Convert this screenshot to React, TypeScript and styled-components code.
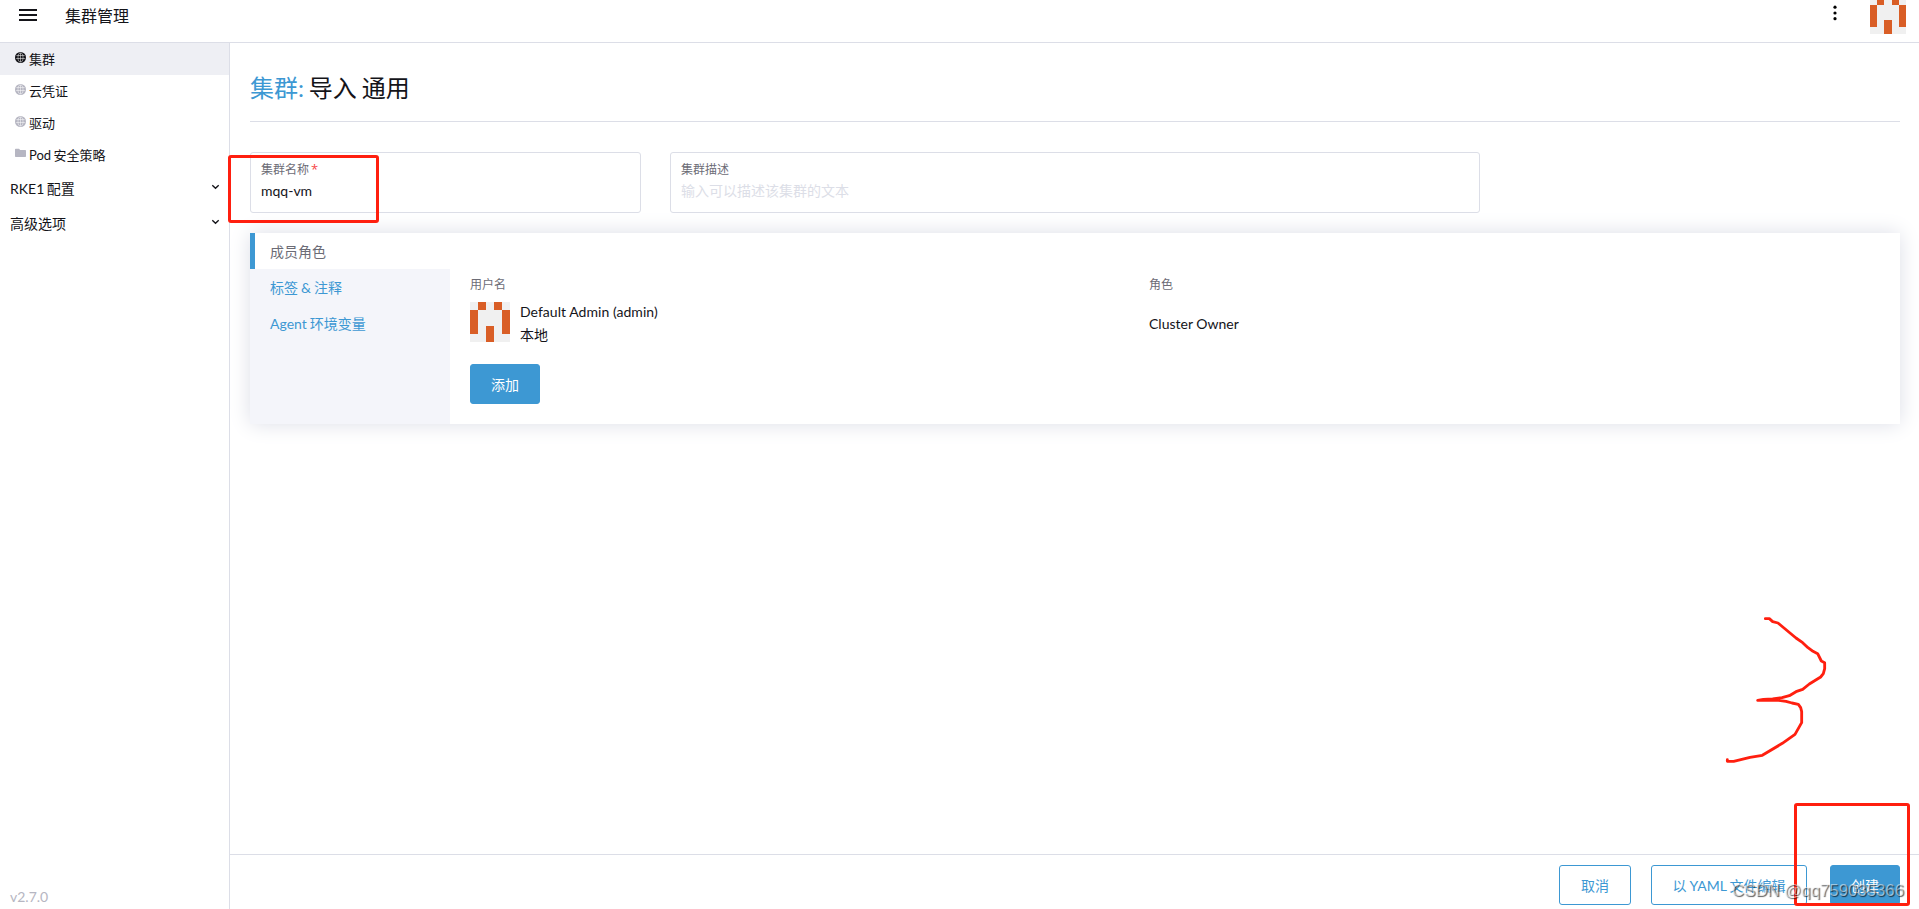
import React from "react";
import styled, { createGlobalStyle, css } from "styled-components";

const BLUE = "#3d98d3";
const LINE = "#dcdee7";
const RED = "#ff1f0f";

const GlobalStyle = createGlobalStyle`
  * { box-sizing: border-box; }
  body {
    margin: 0;
    overflow: hidden;
    background: #fff;
    color: #141419;
    font: 14px/20px Lato, "Noto Sans CJK SC", sans-serif;
  }
`;

const Page = styled.div`
  position: relative;
  width: 100%;
  height: 100vh;
  display: grid;
  grid-template: 43px 1fr / 230px 1fr;
  overflow: hidden;
`;

const Header = styled.header`
  grid-column: 1 / -1;
  display: flex;
  align-items: flex-start;
  border-bottom: 1px solid ${LINE};
  padding: 0 13px 0 19px;
`;

const Burger = styled.svg`
  width: 18px;
  height: 12px;
  margin: 9px 28px 0 0;
`;

const Product = styled.div`
  flex: 1;
  font-size: 16px;
  line-height: 32px;
`;

const Dots = styled.svg`
  width: 4px;
  height: 16px;
  margin: 5px 33px 0 0;
`;

const AvatarSvg = styled.svg<{ $size: number; $lift?: number }>`
  display: block;
  flex: none;
  width: ${(p) => p.$size}px;
  height: ${(p) => p.$size}px;
  margin-top: ${(p) => -(p.$lift ?? 0)}px;
`;

const Sidebar = styled.nav`
  display: flex;
  flex-direction: column;
  border-right: 1px solid ${LINE};
`;

const NavItem = styled.div<{ $active?: boolean }>`
  display: flex;
  height: 32px;
  padding-left: 15px;
  font-size: 13px;
  line-height: 32px;
  word-spacing: -1px;
  background: ${(p) => (p.$active ? "#eeeff4" : "transparent")};
  svg {
    flex: none;
    width: 11px;
    height: 11px;
    margin: 9px 3px 0 0;
    color: ${(p) => (p.$active ? "#141419" : "#b6b6c2")};
  }
`;

const NavGroup = styled.div`
  display: flex;
  justify-content: space-between;
  height: 34.5px;
  padding: 0 9px 0 10px;
  line-height: 35px;
  word-spacing: -1px;
  svg {
    width: 9px;
    height: 6px;
    margin-top: 13px;
  }
`;

const Version = styled.div`
  margin-top: auto;
  padding: 0 0 2px 10px;
  color: #b6b6c2;
`;

const Main = styled.main`
  display: flex;
  flex-direction: column;
  min-width: 0;
`;

const Content = styled.div`
  flex: 1;
  padding: 20px 19px 0 20px;
`;

const Title = styled.h1`
  height: 59px;
  margin: 0 0 30px;
  border-bottom: 1px solid ${LINE};
  font-size: 24px;
  font-weight: 400;
  line-height: 50px;
  word-spacing: -1.3px;
  span { color: ${BLUE}; }
`;

const Fields = styled.div`
  display: flex;
  gap: 29px;
  margin-bottom: 20px;
`;

const Field = styled.label<{ $width: number }>`
  width: ${(p) => p.$width}px;
  height: 61px;
  padding: 7px 10px;
  border: 1px solid ${LINE};
  border-radius: 3px;
`;

const labelText = css`
  font-size: 12px;
  line-height: 20px;
  color: #6c6c76;
`;

const FieldLabel = styled.div`
  ${labelText}
  i {
    margin-left: 2px;
    color: #f64747;
    font: 13px/12px "Open Sans", sans-serif;
  }
`;

const Input = styled.input`
  display: block;
  width: 100%;
  height: 20px;
  margin-top: 1px;
  padding: 0;
  border: 0;
  outline: 0;
  background: transparent;
  color: #141419;
  font: inherit;
  &::placeholder { color: #dcdee7; opacity: 1; }
`;

const Card = styled.section`
  display: flex;
  height: 191px;
  box-shadow: 0 0 20px #dcdee7;
`;

const Tabs = styled.div`
  width: 200px;
  background: #f4f5fa;
`;

const Tab = styled.div<{ $active?: boolean }>`
  height: 36px;
  padding-left: ${(p) => (p.$active ? 15 : 20)}px;
  border-left: ${(p) => (p.$active ? `5px solid ${BLUE}` : "0")};
  background: ${(p) => (p.$active ? "#fff" : "transparent")};
  color: ${(p) => (p.$active ? "#6c6c76" : BLUE)};
  line-height: 38px;
  word-spacing: -0.6px;
`;

const Panel = styled.div`
  flex: 1;
  padding: 42px 20px 0;
  background: #fff;
`;

const MemberGrid = styled.div`
  display: grid;
  grid-template-columns: 679px 1fr;
  row-gap: 7px;
  align-items: center;
  margin-bottom: 22px;
`;

const ColumnName = styled.div`
  ${labelText}
`;

const Member = styled.div`
  display: flex;
  gap: 10px;
  height: 40px;
`;

const MemberText = styled.div`
  line-height: 23px;
  margin-top: -2px;
  letter-spacing: 0.04px;
`;

const Role = styled.div`
  margin-top: 4px;
`;

const Button = styled.button<{ $width: number; $primary?: boolean }>`
  width: ${(p) => p.$width}px;
  height: 40px;
  padding: 2px 0 0;
  border: 1px solid ${BLUE};
  border-radius: 3px;
  background: ${(p) => (p.$primary ? BLUE : "#fff")};
  color: ${(p) => (p.$primary ? "#fff" : BLUE)};
  font: inherit;
  word-spacing: -0.5px;
`;

const Footer = styled.footer`
  display: flex;
  justify-content: flex-end;
  height: 55px;
  padding: 10px 19px 0 0;
  border-top: 1px solid ${LINE};
  button + button { margin-left: 20px; }
  button:last-child { margin-left: 23px; }
`;

const Marker = styled.div<{ $x: number; $y: number; $w: number; $h: number }>`
  position: absolute;
  left: ${(p) => p.$x}px;
  top: ${(p) => p.$y}px;
  width: ${(p) => p.$w}px;
  height: ${(p) => p.$h}px;
  border: 3px solid ${RED};
  border-radius: 3px;
`;

const Scribble = styled.svg`
  position: absolute;
  left: 1700px;
  top: 590px;
  width: 160px;
  height: 190px;
`;

const Watermark = styled.div`
  position: absolute;
  right: 15px;
  bottom: 7px;
  font: 16.8px/22px "Liberation Sans", Arial, sans-serif;
  color: rgba(255, 255, 255, 0.5);
  text-shadow: 1px 1px 1px rgba(0, 0, 0, 0.65);
  white-space: nowrap;
`;

const Avatar = ({ size, lift }: { size: number; lift?: number }) => (
  <AvatarSvg $size={size} $lift={lift} viewBox="0 0 5 5" shapeRendering="crispEdges">
    <path fill="#f0f0f0" d="M0 0h5v5H0z" />
    <path fill="#d95e26" d="M1 0h1v1H1zM3 0h1v1H3zM0 1h1v3H0zM4 1h1v3H4zM2 3h1v2H2z" />
  </AvatarSvg>
);

const Globe = () => (
  <svg viewBox="0 0 11 11">
    <circle cx="5.5" cy="5.5" r="5.5" fill="currentColor" />
    <g fill="none" stroke="#fff" strokeWidth=".5">
      <path d="M1.400 3.500h8.200M1.100 6.500h8.800M5.500 1v9" />
      <ellipse cx="5.5" cy="5.5" rx="2.500" ry="4.500" />
    </g>
  </svg>
);

const Folder = () => (
  <svg viewBox="0 0 11 11">
    <path
      fill="currentColor"
      d="M0 1.500Q0 .8.7.8H4L5.200 2h5.100q.7 0 .7.7v5.600q0 .7-.7.7H.7Q0 9 0 8.300z"
    />
  </svg>
);

const Chevron = () => (
  <svg viewBox="0 0 9 6">
    <path d="M1.300 1.300 4.500 4.200 7.700 1.300" fill="none" stroke="#141419" strokeWidth="1.400" />
  </svg>
);

const NAV = [
  { label: "集群", icon: <Globe />, active: true },
  { label: "云凭证", icon: <Globe /> },
  { label: "驱动", icon: <Globe /> },
  { label: "Pod 安全策略", icon: <Folder /> },
];

export default function App() {
  return (
    <Page>
      <GlobalStyle />
      <Header>
        <Burger viewBox="0 0 18 12">
          <path fill="#141419" d="M0 0h18v2H0zM0 5h18v2H0zM0 10h18v2H0z" />
        </Burger>
        <Product>集群管理</Product>
        <Dots viewBox="0 0 4 16">
          <circle cx="2" cy="2.200" r="1.600" />
          <circle cx="2" cy="8" r="1.600" />
          <circle cx="2" cy="13.700" r="1.600" />
        </Dots>
        <Avatar size={36} lift={2} />
      </Header>
      <Sidebar>
        {NAV.map((n) => (
          <NavItem key={n.label} $active={n.active}>
            {n.icon}
            {n.label}
          </NavItem>
        ))}
        <NavGroup>RKE1 配置<Chevron /></NavGroup>
        <NavGroup>高级选项<Chevron /></NavGroup>
        <Version>v2.7.0</Version>
      </Sidebar>
      <Main>
        <Content>
          <Title><span>集群:</span> 导入 通用</Title>
          <Fields>
            <Field $width={391}>
              <FieldLabel>集群名称<i>*</i></FieldLabel>
              <Input defaultValue="mqq-vm" />
            </Field>
            <Field $width={810}>
              <FieldLabel>集群描述</FieldLabel>
              <Input placeholder="输入可以描述该集群的文本" />
            </Field>
          </Fields>
          <Card>
            <Tabs>
              <Tab $active>成员角色</Tab>
              <Tab>标签 &amp; 注释</Tab>
              <Tab>Agent 环境变量</Tab>
            </Tabs>
            <Panel>
              <MemberGrid>
                <ColumnName>用户名</ColumnName>
                <ColumnName>角色</ColumnName>
                <Member>
                  <Avatar size={40} />
                  <MemberText>
                    <div>Default Admin (admin)</div>
                    <div>本地</div>
                  </MemberText>
                </Member>
                <Role>Cluster Owner</Role>
              </MemberGrid>
              <Button $width={70} $primary>添加</Button>
            </Panel>
          </Card>
        </Content>
        <Footer>
          <Button $width={72}>取消</Button>
          <Button $width={156}>以 YAML 文件编辑</Button>
          <Button $width={70} $primary>创建</Button>
        </Footer>
      </Main>
      <Marker $x={228} $y={155} $w={151} $h={68} />
      <Marker $x={1794} $y={803} $w={116} $h={103} />
      <Scribble viewBox="0 0 480 570">
        <path
          d="M196 86H208L218 95L234 99L288 144L308 158L324 173L339 184L353 191L364 213L374 218V236L370 251L362 261L328 282L308 298L288 305L268 317L246 323L218 327L190 328L173 331H236L258 334L276 339L295 343L302 353L305 365V398L285 433L247 460L187 496L150 502L101 514H82V509"
          fill="none"
          stroke={RED}
          strokeWidth="8.500"
          strokeLinejoin="round"
          strokeLinecap="round"
        />
      </Scribble>
      <Watermark>CSDN @qq759035366</Watermark>
    </Page>
  );
}
